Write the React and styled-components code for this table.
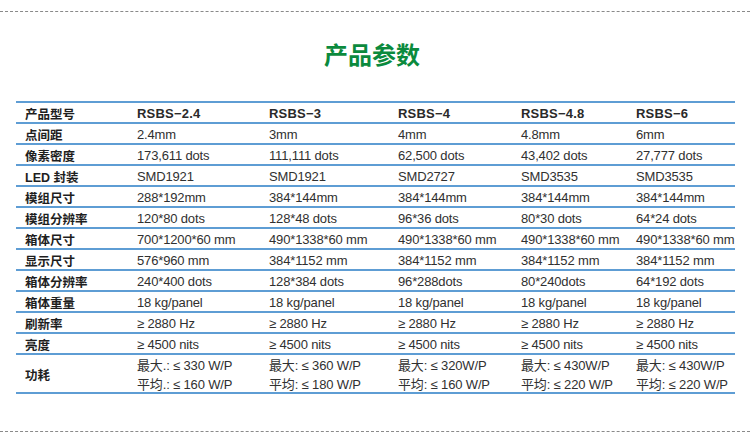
import React from 'react';
import styled, { createGlobalStyle } from 'styled-components';

const GlobalStyle = createGlobalStyle`
  body {
    margin: 0;
    background: #fff;
    font-family: "Liberation Sans", "Noto Sans CJK SC", sans-serif;
  }
`;

const Page = styled.div`
  width: 750px;
  height: 440px;
  padding-top: 11px;
  box-sizing: border-box;
  display: flex;
  flex-direction: column;
`;

const Dashed = styled.div`
  height: 0;
  border-top: 1px dashed #8a8a8a;
  margin-top: ${(p) => p.$top || 0}px;
`;

const Title = styled.h1`
  margin: 27px 0 0;
  height: 30px;
  line-height: 30px;
  text-align: center;
  font-size: 24px;
  font-weight: 700;
  color: #0b8a3d;
  font-family: "Noto Sans CJK SC", sans-serif;
  padding-right: 6px;
`;

const Table = styled.div`
  margin: 32px 0 0 16px;
  width: 719px;
  border-top: 2px solid #5e9dd4;
`;

const Row = styled.div`
  display: grid;
  grid-template-columns: 121px 132px 129px 123px 115px 99px;
  height: ${(p) => p.$h || 19}px;
  align-items: center;
  border-bottom: 2px solid #5e9dd4;
`;

const Label = styled.div`
  padding-left: 9px;
  font-size: 12.5px;
  font-weight: 700;
  color: #1e1e1e;
  white-space: nowrap;
`;

const Cell = styled.div`
  font-size: 13px;
  letter-spacing: ${(p) => (p.$head ? '0.2px' : '-0.15px')};
  color: ${(p) => (p.$head ? '#2a2a2a' : '#303030')};
  font-weight: ${(p) => (p.$head ? 700 : 400)};
  white-space: nowrap;
  line-height: 19px;
  padding-top: 1px;
`;

const head = ['RSBS−2.4', 'RSBS−3', 'RSBS−4', 'RSBS−4.8', 'RSBS−6'];

const rows = [
  ['点间距', ['2.4mm', '3mm', '4mm', '4.8mm', '6mm']],
  ['像素密度', ['173,611 dots', '111,111 dots', '62,500 dots', '43,402 dots', '27,777 dots']],
  ['LED 封装', ['SMD1921', 'SMD1921', 'SMD2727', 'SMD3535', 'SMD3535']],
  ['模组尺寸', ['288*192mm', '384*144mm', '384*144mm', '384*144mm', '384*144mm']],
  ['模组分辨率', ['120*80 dots', '128*48 dots', '96*36 dots', '80*30 dots', '64*24 dots']],
  ['箱体尺寸', ['700*1200*60 mm', '490*1338*60 mm', '490*1338*60 mm', '490*1338*60 mm', '490*1338*60 mm']],
  ['显示尺寸', ['576*960 mm', '384*1152 mm', '384*1152 mm', '384*1152 mm', '384*1152 mm']],
  ['箱体分辨率', ['240*400 dots', '128*384 dots', '96*288dots', '80*240dots', '64*192 dots']],
  ['箱体重量', ['18 kg/panel', '18 kg/panel', '18 kg/panel', '18 kg/panel', '18 kg/panel']],
  ['刷新率', ['≥ 2880 Hz', '≥ 2880 Hz', '≥ 2880 Hz', '≥ 2880 Hz', '≥ 2880 Hz']],
  ['亮度', ['≥ 4500 nits', '≥ 4500 nits', '≥ 4500 nits', '≥ 4500 nits', '≥ 4500 nits']],
];

const power = [
  ['最大.: ≤ 330 W/P', '平均.: ≤ 160 W/P'],
  ['最大: ≤ 360 W/P', '平均: ≤ 180 W/P'],
  ['最大: ≤ 320W/P', '平均: ≤ 160 W/P'],
  ['最大: ≤ 430W/P', '平均: ≤ 220 W/P'],
  ['最大: ≤ 430W/P', '平均: ≤ 220 W/P'],
];

export default function App() {
  return (
    <Page>
      <GlobalStyle />
      <Dashed />
      <Title>产品参数</Title>
      <Table>
        <Row>
          <Label>产品型号</Label>
          {head.map((h) => (
            <Cell key={h} $head>{h}</Cell>
          ))}
        </Row>
        {rows.map(([label, vals]) => (
          <Row key={label}>
            <Label>{label}</Label>
            {vals.map((v, i) => (
              <Cell key={i}>{v}</Cell>
            ))}
          </Row>
        ))}
        <Row $h={37}>
          <Label>功耗</Label>
          {power.map((p, i) => (
            <Cell key={i}>
              {p[0]}
              <br />
              {p[1]}
            </Cell>
          ))}
        </Row>
      </Table>
      <Dashed $top={37} />
    </Page>
  );
}
